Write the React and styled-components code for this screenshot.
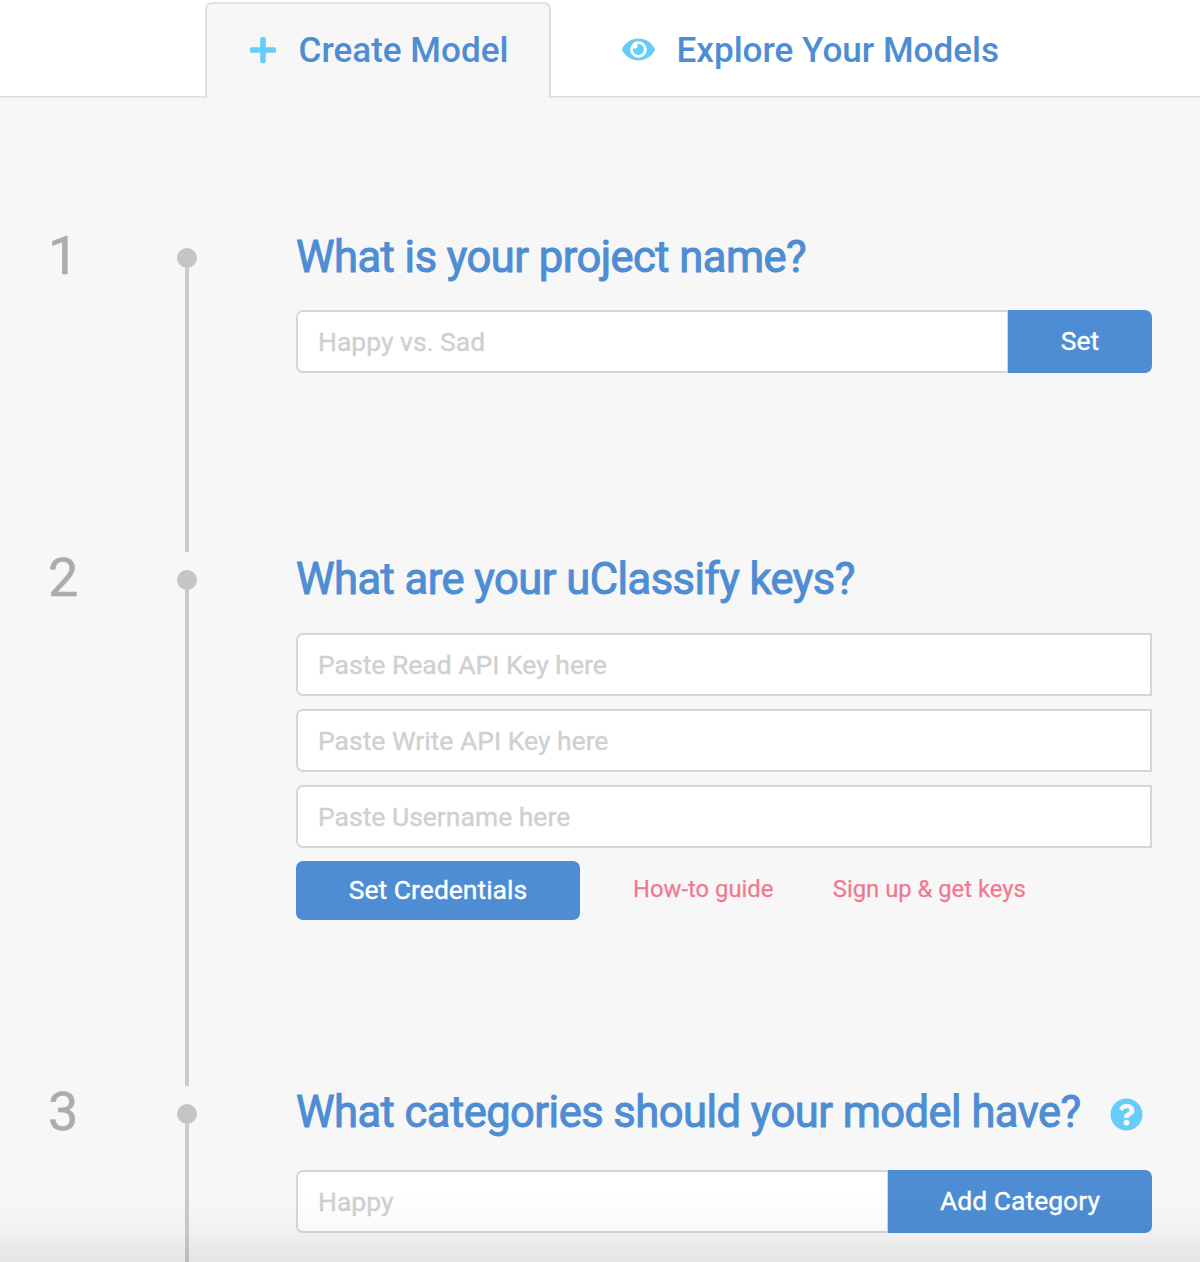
import React from "react";
import styled, { createGlobalStyle } from "styled-components";
import { FaPlus, FaEye, FaQuestionCircle } from "react-icons/fa";

const GlobalStyle = createGlobalStyle`
  *, *::before, *::after { box-sizing: border-box; }
  html, body { margin: 0; background: #f7f7f7; overflow: hidden; }
  body { font-family: Roboto, "Liberation Sans", sans-serif; -webkit-font-smoothing: antialiased; }
`;

const Page = styled.div`
  position: relative;
  width: 1200px;
  height: 1262px;
  overflow: hidden;
  background: #f7f7f7;
`;

const Tabs = styled.nav`
  display: flex;
  height: 98px;
  padding: 2px 0 0 205px;
  background: #fff;
  box-shadow: inset 0 -1px 0 #e9ebed, inset 0 -2px 0 #d9dee2;
`;

const Tab = styled.a`
  display: flex;
  align-items: center;
  width: ${(p) => p.$width}px;
  height: 96px;
  padding: 0 0 3px ${(p) => p.$indent}px;
  border: 2px solid ${(p) => (p.$active ? "#dde1e5" : "transparent")};
  border-bottom: 0;
  border-radius: 7px 7px 0 0;
  background: ${(p) => (p.$active ? "#f7f7f7" : "transparent")};
  color: #4e8dd3;
  font-size: 35.1px;
  font-weight: 500;
  white-space: nowrap;
  svg {
    flex: none;
    margin-right: ${(p) => p.$gap}px;
    color: #66cdf8;
  }
`;

const Steps = styled.main`
  display: flex;
  flex-direction: column;
  padding-top: 126px;
`;

const Step = styled.section`
  display: grid;
  grid-template-columns: 177px 20px 955px;
  height: ${(p) => p.$height}px;
`;

const StepNumber = styled.div`
  padding-left: 48px;
  color: #acacac;
  font-size: 54px;
  line-height: 64px;
  -webkit-text-stroke: 0.5px #acacac;
`;

const Rail = styled.div`
  display: flex;
  flex-direction: column;
  align-items: center;
  margin-bottom: -6px;
  padding-top: 24px;
`;

const Dot = styled.div`
  flex: none;
  width: 20px;
  height: 20px;
  border-radius: 50%;
  background: #c5c5c5;
`;

const Line = styled.div`
  flex: 1;
  width: 4px;
  margin-top: -1px;
  background: #cbcbcb;
`;

const Content = styled.div`
  margin-left: 99px;
`;

const Heading = styled.h2`
  display: flex;
  align-items: center;
  height: ${(p) => (p.$tall ? 90 : 86.4)}px;
  margin: 0;
  padding-bottom: ${(p) => (p.$tall ? 24 : 20.4)}px;
  color: #4e8dd3;
  font-size: 43.5px;
  font-weight: 400;
  letter-spacing: -0.53px;
  -webkit-text-stroke: 1px #4e8dd3;
  white-space: nowrap;
  svg {
    flex: none;
    margin: 3px 9.5px 0 auto;
    color: #66cdf8;
    stroke-width: 0;
  }
`;

const Field = styled.div`
  display: flex;
  width: 856px;
  height: 63px;
  margin-bottom: 13px;
`;

const Input = styled.input`
  flex: 1;
  min-width: 0;
  height: 63px;
  padding: 0 20px;
  border: 2px solid #d3d7dc;
  border-right-width: ${(p) => (p.$joined ? 1 : 2)}px;
  border-radius: 7px 0 0 7px;
  outline: none;
  background: #fff;
  font: 400 26.5px Roboto, "Liberation Sans", sans-serif;
  &::placeholder {
    color: #d0d0d0;
    opacity: 1;
    -webkit-text-stroke: 0.4px #d0d0d0;
  }
`;

const Button = styled.button`
  width: ${(p) => p.$width}px;
  height: ${(p) => p.$height || 63}px;
  padding: 0 0 2px;
  border: 0;
  border-radius: ${(p) => (p.$joined ? "0 7px 7px 0" : "7px")};
  background: #4e8dd3;
  color: #fff;
  font: 400 26.5px Roboto, "Liberation Sans", sans-serif;
  -webkit-text-stroke: 0.35px #fff;
`;

const Actions = styled.div`
  display: flex;
  align-items: center;
  height: 59px;
`;

const TextLink = styled.a`
  margin-left: ${(p) => p.$gap}px;
  padding-bottom: 3px;
  color: #f2788f;
  font-size: 23.8px;
  -webkit-text-stroke: 0.25px #f2788f;
  white-space: nowrap;
`;

const BottomFade = styled.div`
  position: absolute;
  inset: auto 0 0 0;
  height: 70px;
  background: linear-gradient(to bottom, rgba(0, 0, 0, 0), rgba(0, 0, 0, 0.018) 50%, rgba(0, 0, 0, 0.075));
  pointer-events: none;
`;

function NumberedStep({ number, height, title, help, children }) {
  return (
    <Step $height={height}>
      <StepNumber>{number}</StepNumber>
      <Rail>
        <Dot />
        <Line />
      </Rail>
      <Content>
        <Heading $tall={help}>
          {title}
          {help && <FaQuestionCircle size={33} />}
        </Heading>
        {children}
      </Content>
    </Step>
  );
}

export default function App() {
  return (
    <Page>
      <GlobalStyle />
      <Tabs>
        <Tab $active $width={346} $indent={41} $gap={20.5}>
          <FaPlus size={30} />
          Create Model
        </Tab>
        <Tab $width={460} $indent={69} $gap={21.5}>
          <FaEye size={33} />
          Explore Your Models
        </Tab>
      </Tabs>
      <Steps>
        <NumberedStep number="1" height={322.4} title="What is your project name?">
          <Field>
            <Input $joined placeholder="Happy vs. Sad" />
            <Button $joined $width={144}>Set</Button>
          </Field>
        </NumberedStep>
        <NumberedStep number="2" height={533.2} title="What are your uClassify keys?">
          <Field><Input placeholder="Paste Read API Key here" /></Field>
          <Field><Input placeholder="Paste Write API Key here" /></Field>
          <Field><Input placeholder="Paste Username here" /></Field>
          <Actions>
            <Button $width={284} $height={59}>Set Credentials</Button>
            <TextLink $gap={53}>How-to guide</TextLink>
            <TextLink $gap={59.5}>Sign up &amp; get keys</TextLink>
          </Actions>
        </NumberedStep>
        <NumberedStep number="3" height={300} title="What categories should your model have?" help>
          <Field>
            <Input $joined placeholder="Happy" />
            <Button $joined $width={264}>Add Category</Button>
          </Field>
        </NumberedStep>
      </Steps>
      <BottomFade />
    </Page>
  );
}
